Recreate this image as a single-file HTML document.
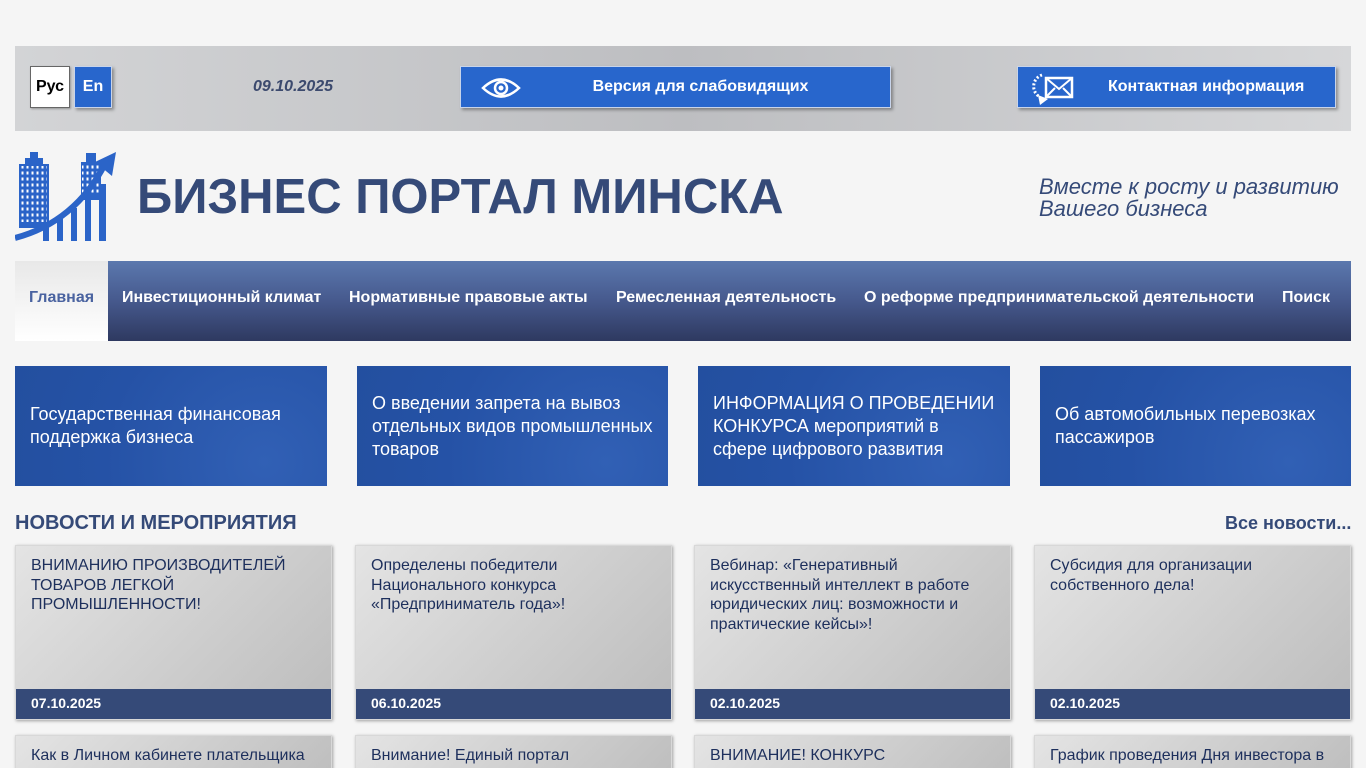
<!DOCTYPE html>
<html><head><meta charset="utf-8"><style>
*{margin:0;padding:0;box-sizing:border-box}
html,body{width:1366px;height:768px;overflow:hidden}
body{background:#f5f5f5;font-family:"Liberation Sans",sans-serif;position:relative}
.a{position:absolute}
.top{left:15px;top:46px;width:1336px;height:85px;background:linear-gradient(90deg,#d3d4d6 0%,#bdbec1 50%,#d6d7d9 100%)}
.btn{background:#2866cc;color:#fff;font-weight:bold;box-shadow:2px 2px 3px rgba(0,0,0,.35);border:1px solid #c8d4ea}
.nav{left:15px;top:261px;width:1336px;height:80px;background:linear-gradient(#5b78ae,#46598d 50%,#2e3960)}
.nav span{position:absolute;top:28px;color:#fff;font-weight:bold;font-size:16px}
.ban{top:366px;height:120px;background:radial-gradient(circle at 80% 80%,#3160b5,#2552a6 60%,#234f9f);color:#fff;font-size:18px;line-height:23px;display:flex;align-items:center;padding:0 15px}
.card{top:545px;width:317px;height:175px;background:linear-gradient(135deg,#e4e4e4,#bcbcbc);box-shadow:1px 1px 3px rgba(0,0,0,.35);border:1px solid #d8d8d8}
.card p{padding:10px 15px 0;color:#1d2f5c;font-size:16px;line-height:19.5px}
.card .d{position:absolute;left:0;right:0;bottom:0;height:30px;background:#354a78;color:#fff;font-weight:bold;font-size:14px;padding:6px 15px}
.c2{top:735px;height:60px}
</style></head><body>
<div class="a top"></div>
<div class="a" style="left:30px;top:66px;width:40px;height:42px;background:#fff;border:1px solid #666;box-shadow:1px 1px 2px rgba(0,0,0,.3);font-weight:bold;font-size:16px;text-align:center;line-height:40px">Рус</div>
<div class="a btn" style="left:74px;top:66px;width:38px;height:42px;font-size:16px;text-align:center;line-height:40px">En</div>
<div class="a" style="left:253px;top:78px;font-style:italic;font-weight:bold;font-size:16px;color:#3c4a6e">09.10.2025</div>
<div class="a btn" style="left:460px;top:66px;width:431px;height:42px;font-size:16px;line-height:40px;text-align:center;padding-left:50px">Версия для слабовидящих
<svg class="a" style="left:20px;top:10px" width="40" height="22" viewBox="0 0 40 22"><path d="M2 11Q20 -6 38 11Q20 28 2 11Z" fill="none" stroke="#fff" stroke-width="2.5"/><circle cx="20" cy="11" r="6" fill="none" stroke="#fff" stroke-width="2.5"/><circle cx="20" cy="11" r="2.5" fill="#fff"/></svg></div>
<div class="a btn" style="left:1017px;top:66px;width:319px;height:42px;font-size:16px;line-height:40px;padding-left:90px">Контактная информация
<svg class="a" style="left:12px;top:2px" width="44" height="38" viewBox="0 0 44 38"><path d="M12 6A12 12 0 0 0 10 28" fill="none" stroke="#fff" stroke-width="3" stroke-dasharray="2 2"/><path d="M8 26L18 30L10 36Z" fill="#fff"/><rect x="16" y="9" width="26" height="19" fill="none" stroke="#fff" stroke-width="2.5"/><path d="M16 9L29 20L42 9M16 28L25 19M42 28L33 19" fill="none" stroke="#fff" stroke-width="2"/></svg></div>
<svg class="a" style="left:15px;top:152px" width="102" height="90" viewBox="0 0 102 90">
<defs><pattern id="w" width="5" height="6" patternUnits="userSpaceOnUse"><rect x="1.5" y="1.5" width="2" height="3" fill="#fff"/></pattern></defs>
<g fill="#2b64c8"><rect x="4" y="12" width="30" height="64"/><rect x="10" y="6" width="18" height="8"/><rect x="15" y="0" width="8" height="7"/><rect x="66" y="10" width="20" height="38"/><rect x="71" y="1" width="10" height="10"/><rect x="28" y="72" width="6" height="17"/><rect x="42" y="64" width="6" height="25"/><rect x="56" y="56" width="6" height="33"/><rect x="70" y="46" width="6" height="43"/><rect x="84" y="32" width="7" height="57"/></g>
<rect x="6" y="14" width="26" height="56" fill="url(#w)"/><rect x="67" y="12" width="18" height="30" fill="url(#w)"/>
<path d="M0 86Q60 70 90 12" fill="none" stroke="#2b64c8" stroke-width="6"/><path d="M80 10L101 0L97 24Z" fill="#2b64c8"/></svg>
<div class="a" style="left:137px;top:168px;font-size:49px;font-weight:bold;color:#354a78;line-height:58px">БИЗНЕС ПОРТАЛ МИНСКА</div>
<div class="a" style="left:1039px;top:176px;font-size:22px;font-style:italic;color:#354a78;line-height:22px">Вместе к росту и развитию<br>Вашего бизнеса</div>
<div class="a nav">
<div class="a" style="left:0;top:0;width:93px;height:80px;background:linear-gradient(#e8e8e8,#fff)"></div>
<span style="left:14px;color:#4a63a0">Главная</span><span style="left:107px">Инвестиционный климат</span><span style="left:334px">Нормативные правовые акты</span><span style="left:601px">Ремесленная деятельность</span><span style="left:849px">О реформе предпринимательской деятельности</span><span style="left:1267px">Поиск</span></div>
<div class="a ban" style="left:15px;width:312px">Государственная финансовая поддержка бизнеса</div>
<div class="a ban" style="left:357px;width:311px">О введении запрета на вывоз отдельных видов промышленных товаров</div>
<div class="a ban" style="left:698px;width:312px">ИНФОРМАЦИЯ О ПРОВЕДЕНИИ КОНКУРСА мероприятий в сфере цифрового развития</div>
<div class="a ban" style="left:1040px;width:311px">Об автомобильных перевозках пассажиров</div>
<div class="a" style="left:15px;top:512px;font-size:20px;font-weight:bold;color:#354a78">НОВОСТИ И МЕРОПРИЯТИЯ</div>
<div class="a" style="left:1225px;top:513px;font-size:18px;font-weight:bold;color:#354a78">Все новости...</div>
<div class="a card" style="left:15px"><p>ВНИМАНИЮ ПРОИЗВОДИТЕЛЕЙ ТОВАРОВ ЛЕГКОЙ ПРОМЫШЛЕННОСТИ!</p><div class="d">07.10.2025</div></div>
<div class="a card" style="left:355px"><p>Определены победители Национального конкурса «Предприниматель года»!</p><div class="d">06.10.2025</div></div>
<div class="a card" style="left:694px"><p>Вебинар: «Генеративный искусственный интеллект в работе юридических лиц: возможности и практические кейсы»!</p><div class="d">02.10.2025</div></div>
<div class="a card" style="left:1034px"><p>Субсидия для организации собственного дела!</p><div class="d">02.10.2025</div></div>
<div class="a card c2" style="left:15px"><p>Как в Личном кабинете плательщика</p></div>
<div class="a card c2" style="left:355px"><p>Внимание! Единый портал</p></div>
<div class="a card c2" style="left:694px"><p>ВНИМАНИЕ! КОНКУРС</p></div>
<div class="a card c2" style="left:1034px"><p>График проведения Дня инвестора в</p></div>
</body></html>
